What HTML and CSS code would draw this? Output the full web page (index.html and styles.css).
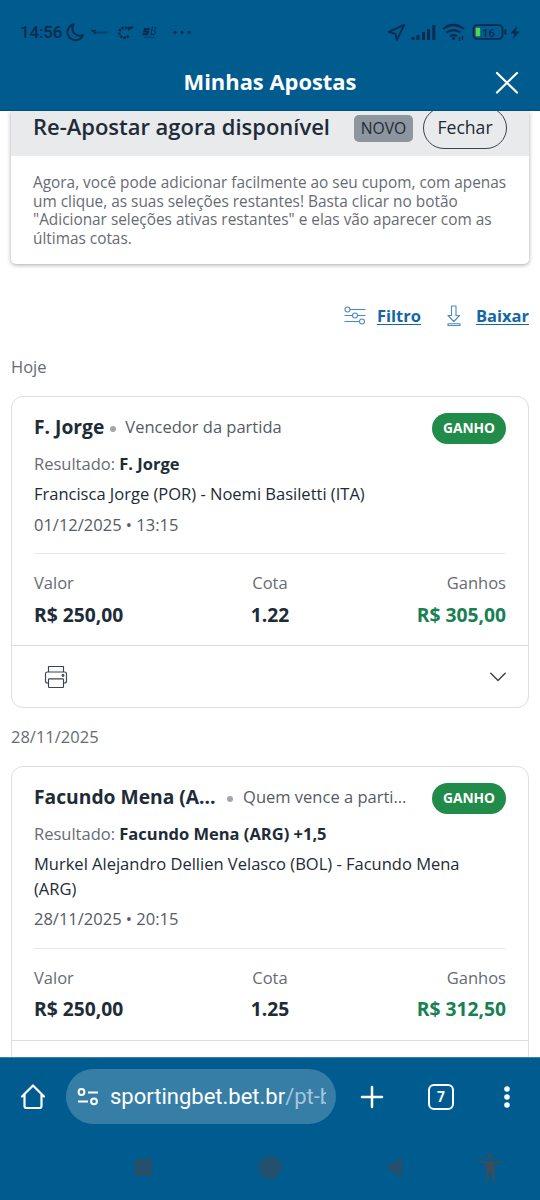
FILE: index.html
```html
<!DOCTYPE html>
<html lang="pt-BR">
<head>
<meta charset="utf-8">
<title>Minhas Apostas</title>
<link rel="stylesheet" href="styles.css">
</head>
<body>
<div class="screen">
  <header class="top">
    <div class="status">
      <span class="clock">14:56</span>
      <svg class="status-left" width="130" height="24" viewBox="65 20 130 24" fill="none" stroke="#082b4e">
        <path d="M73.500 24.500a8 8 0 1 0 9.500 10.500c-7 2.500-13-3.500-9.500-10.500z" stroke-width="2" stroke-linejoin="round"/>
        <path d="M91 30.500l3 .5 2-1M94 31l1 3" stroke-width="1.300"/>
        <path d="M95 32.500h12.500" stroke-width="2.200" stroke-dasharray="1.800 .5" opacity=".65"/>
        <path d="M127 28.500a5 5 0 1 0 1.500 7" stroke-width="2.500" stroke-dasharray="2.400 1"/>
        <path d="M125 28l8-.8-5 2.500" stroke-width="1.600"/>
        <path d="M149.500 29h-4.500l-.8 2.500h3.800l-.8 2.700h-4.700" stroke-width="2"/>
        <path d="M152.500 26.500l-1.500 8h3.500q2.500-3-.5-4 3.500-3 0-3.500" stroke-width="1"/>
        <path d="M144 37.300h11" stroke-width="1" opacity=".6"/>
        <g fill="#082b4e" stroke="none"><circle cx="175" cy="32.300" r="1.500"/><circle cx="182" cy="32.300" r="1.500"/><circle cx="189" cy="32.300" r="1.500"/></g>
      </svg>
      <svg class="status-right" width="136" height="24" viewBox="386 20 136 24" fill="none" stroke="#082b4e">
        <path d="M404.300 24.800l-7.500 15-1.500-6-6.500-2z" stroke-width="1.900" stroke-linejoin="round"/>
        <path d="M413 40v-3M418 40v-5M423.500 40v-8M428.500 40v-11M433.800 40v-15" stroke-width="3"/>
        <path d="M443 29q10.500-8 21 0M446.500 32.600q7-5 14 0M450 36.200q3.500-2 7 0" stroke-width="2.200"/>
        <circle cx="453.500" cy="38.500" r="1.600" fill="#082b4e" stroke="none"/>
        <path d="M459.500 37v4M462.500 36v4" stroke-width="1.500"/>
        <rect x="473.500" y="25.200" width="29" height="13.600" rx="3.500" stroke-width="1.800"/>
        <path d="M505.300 29.500v5" stroke-width="2"/>
        <rect x="475.700" y="27.700" width="4.500" height="8.500" rx="1" fill="#57d544" stroke="none"/>
        <text class="battery-text" x="482" y="36.500">16</text>
        <path d="M517 26l-6.500 7.500h4l-1.500 5.500 6.800-7.500h-4z" fill="#082b4e" stroke="none"/>
      </svg>
    </div>
    <div class="title-row">
      <h1 class="page-title">Minhas Apostas</h1>
      <svg class="close" width="24" height="24" viewBox="0 0 24 24" fill="none" stroke="#fff" stroke-width="2.200" stroke-linecap="round"><path d="M2 2L22 21.500M22 2L2 21.500"/></svg>
    </div>
  </header>

  <main class="content">
    <section class="banner">
      <div class="banner-head">
        <h2 class="banner-title">Re-Apostar agora disponível</h2>
        <span class="tag">NOVO</span>
        <span class="dismiss">Fechar</span>
      </div>
      <p class="banner-text">Agora, você pode adicionar facilmente ao seu cupom, com apenas<br>um clique, as suas seleções restantes! Basta clicar no botão<br>"Adicionar seleções ativas restantes" e elas vão aparecer com as<br>últimas cotas.</p>
    </section>

    <div class="actions">
      <svg width="22" height="20" viewBox="0 0 22 20" fill="none" stroke="#4b8bbd" stroke-width="1.100">
        <circle cx="3.500" cy="3.500" r="2.500"/><path d="M6 3.500h15.500"/>
        <circle cx="11" cy="9.500" r="2.500"/><path d="M.5 9.500h8M13.500 9.500h8"/>
        <circle cx="18" cy="15.500" r="2.500"/><path d="M.5 15.500h15"/>
      </svg>
      <a class="link filter-link">Filtro</a>
      <svg class="download" width="16" height="22" viewBox="0 0 16 22" fill="none" stroke="#4b8bbd" stroke-width="1.100" stroke-linejoin="round">
        <path d="M5.500 1h4.500v9.500h3.500L7.800 16.500 2 10.500h3.500z"/><rect x="2" y="18.700" width="12" height="1.800"/>
      </svg>
      <a class="link save-link">Baixar</a>
    </div>

    <h3 class="day">Hoje</h3>
    <article class="bet">
      <div class="bet-body">
        <div class="bet-head">
          <span class="pick">F. Jorge</span><i class="dot"></i><span class="market">Vencedor da partida</span>
          <span class="won">GANHO</span>
        </div>
        <p class="line result">Resultado: <b>F. Jorge</b></p>
        <p class="line event">Francisca Jorge (POR) - Noemi Basiletti (ITA)</p>
        <p class="line date">01/12/2025 • 13:15</p>
        <div class="totals">
          <div class="total"><span class="label">Valor</span><span class="value">R$ 250,00</span></div>
          <div class="total middle"><span class="label">Cota</span><span class="value">1.22</span></div>
          <div class="total end"><span class="label">Ganhos</span><span class="value gain">R$ 305,00</span></div>
        </div>
      </div>
      <div class="bet-foot">
        <svg width="24" height="24" viewBox="0 0 24 24" fill="none" stroke="#3b434c" stroke-width="1.150" stroke-linejoin="round">
          <path d="M4.500 7V1.500h15V7M4.500 18H3.500Q1.500 18 1.500 16V9Q1.500 7 3.500 7h17Q22.500 7 22.500 9v7Q22.500 18 20.500 18h-1"/><rect x="4.500" y="13.800" width="15" height="8.700" rx=".8"/><circle cx="19" cy="10.500" r=".9"/>
        </svg>
        <svg class="chevron" width="18" height="12" viewBox="0 0 18 12" fill="none" stroke="#3b434c" stroke-width="1.500" stroke-linecap="round"><path d="M1.800 2.200l7.200 7.300 7.200-7.300"/></svg>
      </div>
    </article>

    <h3 class="day">28/11/2025</h3>
    <article class="bet">
      <div class="bet-body">
        <div class="bet-head">
          <span class="pick">Facundo Mena (A...</span><i class="dot wide"></i><span class="market">Quem vence a parti...</span>
          <span class="won">GANHO</span>
        </div>
        <p class="line result">Resultado: <b>Facundo Mena (ARG) +1,5</b></p>
        <p class="line event">Murkel Alejandro Dellien Velasco (BOL) - Facundo Mena<br>(ARG)</p>
        <p class="line date">28/11/2025 • 20:15</p>
        <div class="totals">
          <div class="total"><span class="label">Valor</span><span class="value">R$ 250,00</span></div>
          <div class="total middle"><span class="label">Cota</span><span class="value">1.25</span></div>
          <div class="total end"><span class="label">Ganhos</span><span class="value gain">R$ 312,50</span></div>
        </div>
      </div>
      <div class="bet-foot"></div>
    </article>
  </main>

  <footer class="bottom">
    <div class="browser">
      <svg class="home" width="26" height="28" viewBox="0 0 26 28" fill="none" stroke="#fff" stroke-width="2.200" stroke-linejoin="round" stroke-linecap="round"><path d="M2 13.500L13 2.500l11 11M4.500 11.500V23q0 2 2 2h13q2 0 2-2V11.500"/></svg>
      <div class="address">
        <svg width="22" height="18" viewBox="0 0 22 18" fill="none" stroke="#fff" stroke-width="2"><circle cx="4.500" cy="4" r="2.900"/><path d="M11 4.500h10M1 13.500h10"/><circle cx="17" cy="13.300" r="2.900"/></svg>
        <span class="url">sportingbet.bet.br<span class="path">/pt-b</span></span>
      </div>
      <svg class="plus" width="24" height="24" viewBox="0 0 24 24" fill="none" stroke="#fff" stroke-width="2.500" stroke-linecap="round"><path d="M12 2v20M2 12h20"/></svg>
      <span class="tabs">7</span>
      <svg class="more" width="8" height="24" viewBox="0 0 8 24" fill="#fff"><circle cx="4" cy="4" r="2.800"/><circle cx="4" cy="12" r="2.800"/><circle cx="4" cy="20" r="2.800"/></svg>
    </div>
    <svg class="system" width="540" height="66" viewBox="0 1134 540 66" fill="#25506c">
      <rect x="135" y="1159" width="17.500" height="17"/>
      <circle cx="270" cy="1167.500" r="12.500" fill="#15557f"/><circle cx="270" cy="1167.500" r="10"/>
      <path d="M385 1167.500l17-10v20z"/>
      <g fill="#3b4d5a"><circle cx="490" cy="1156.500" r="2.600"/><path d="M478.500 1160l6.500 1.200h10l7-1.200v2l-7 1.800v17.500h-2.500v-8.500h-4v8.500H486v-17.500l-7.500-1.800z"/></g>
    </svg>
  </footer>
</div>
</body>
</html>
```
FILE: styles.css
```css
* { box-sizing: border-box; }
body { margin: 0; background: #fff; font-family: "Open Sans", "Noto Sans", sans-serif; color: #202b38; }
h1, h2, h3, p { margin: 0; }
svg { flex: none; display: block; }
.screen { width: 540px; height: 1200px; display: flex; flex-direction: column; overflow: hidden; }

.top { flex: none; height: 111px; background: #005b8e; border-bottom: 1px solid #00507e; }
.status { height: 62px; padding: 2px 18px 0 20px; display: flex; align-items: center; }
.clock { width: 45px; font: 500 16.900px Roboto, sans-serif; letter-spacing: -.1px; color: #082b4e; white-space: nowrap; }
.status-right { margin-left: auto; }
.battery-text { font: 500 11.500px Roboto, sans-serif; fill: #082b4e; stroke: none; }
.title-row { height: 41px; display: grid; grid-template-columns: 1fr auto 1fr; align-items: center; padding-right: 21px; padding-left: 21px; }
.page-title { grid-column: 2; margin-top: -2px; font-size: 21.900px; line-height: 30px; font-weight: 700; color: #fff; white-space: nowrap; }
.close { justify-self: end; }

.content { flex: none; height: 946px; overflow: hidden; padding: 0 11px; background: #fff; }
.banner { height: 153px; border-radius: 0 0 5px 5px; background: #fff; box-shadow: 0 1px 4px rgba(0, 0, 0, .35); }
.banner-head { height: 45px; padding: 0 22px; background: #e8eaec; display: flex; align-items: center; }
.banner-title { width: 321px; font-size: 21.960px; line-height: 30px; font-weight: 600; white-space: nowrap; margin-top: -13px; }
.tag { width: 59px; height: 27px; margin-top: -11px; border-radius: 5px; background: #8d959e; font-size: 15.700px; line-height: 27px; text-align: center; }
.dismiss { width: 84px; height: 42px; margin: -12px 0 0 10px; border: 1px solid #3b434c; border-radius: 21px; font-size: 17.600px; line-height: 39px; text-align: center; }
.banner-text { padding: 18px 22px 0; font-size: 15.380px; font-weight: 500; line-height: 18.700px; color: #666b73; white-space: nowrap; }

.actions { height: 24px; margin-top: 40px; display: flex; align-items: center; justify-content: flex-end; }
.link { font-size: 16.500px; line-height: 24px; font-weight: 700; color: #1467a5; text-decoration: underline; text-underline-offset: 2px; }
.filter-link { margin: 0 25px 0 11px; }
.save-link { margin-left: 14px; }

.day { height: 24px; margin-top: 27px; font-size: 16.500px; line-height: 24px; font-weight: 400; color: #666b73; }
.bet { height: 312px; margin-top: 17px; border: 1px solid #dcdee1; border-radius: 12px; }
.bet + .day { margin-top: 17px; }
.bet:last-child { height: 337px; }
.bet-body { padding: 16px 22px 18px; }
.bet-head { height: 31px; display: flex; align-items: center; white-space: nowrap; }
.pick { margin-top: -3px; font-size: 19.250px; font-weight: 700; line-height: 28px; }
.dot { width: 6px; height: 6px; margin: 1px 9px 0 6px; border-radius: 50%; background: #a2a7ae; }
.dot.wide { margin-right: 10px; margin-left: 11.500px; }
.market { margin-top: -4px; font-size: 16.500px; line-height: 24px; color: #545b64; }
.won { width: 74px; height: 31px; margin-left: auto; border-radius: 16px; background: #218b49; color: #fff; font-size: 13.750px; line-height: 30px; font-weight: 700; text-align: center; }
.line { font-size: 16.500px; line-height: 24.500px; white-space: nowrap; }
.result { margin-top: 8px; color: #666b73; }
.result b { color: #202b38; }
.event { margin-top: 5.500px; }
.date { margin-top: 6px; color: #545b64; }
.totals { margin-top: 16px; padding-top: 17px; border-top: 1px solid #e6e8ea; display: grid; grid-template-columns: 1fr 1fr 1fr; }
.total { display: flex; flex-direction: column; gap: 7px; }
.middle { align-items: center; }
.end { align-items: flex-end; }
.label { font-size: 16.500px; line-height: 24.500px; color: #666b73; }
.value { font-size: 19.250px; line-height: 24.500px; font-weight: 700; white-space: nowrap; }
.gain { color: #188052; }
.bet-foot { height: 62px; padding: 0 21px 0 32px; border-top: 1px solid #dcdee1; display: flex; align-items: center; justify-content: space-between; }

.bottom { flex: none; height: 143px; border-top: 1px solid #3d80a8; background: #005b8e; color: #fff; }
.browser { height: 76px; padding: 1px 29px 0 20px; display: flex; align-items: center; }
.address { width: 270px; height: 55px; margin-left: 20px; padding: 0 11px; border-radius: 28px; background: #377ea7; display: flex; align-items: center; gap: 11px; }
.url { width: 216px; flex: none; overflow: hidden; font: 400 22px/32px Roboto, sans-serif; white-space: nowrap; }
.path { color: #a5c6da; }
.plus { margin-left: 24px; }
.tabs { width: 26px; height: 26px; margin-left: 44px; border: 2.500px solid #fff; border-radius: 6px; font: 700 14px/22px Roboto, sans-serif; text-align: center; }
.more { margin-left: auto; }
```
